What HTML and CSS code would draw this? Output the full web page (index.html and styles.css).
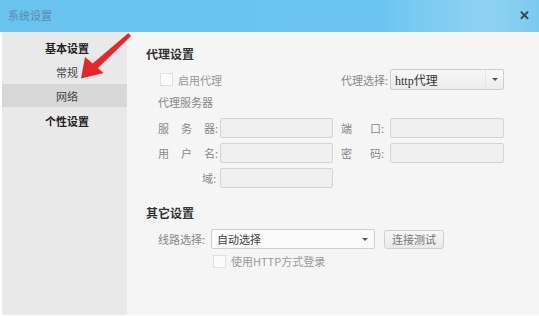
FILE: index.html
```html
<!DOCTYPE html>
<html lang="zh-CN">
<head>
<meta charset="utf-8">
<title>系统设置</title>
<link rel="stylesheet" href="styles.css">
</head>
<body>
<div class="window">
  <div class="titlebar">
    <span class="title">系统设置</span>
    <span class="close">✕</span>
  </div>
  <div class="main">
    <nav class="sidebar">
      <div class="nav-group">基本设置</div>
      <div class="nav-item">常规</div>
      <div class="nav-item active">网络</div>
      <div class="nav-group second">个性设置</div>
    </nav>
    <section class="content">
      <h2 class="sec-title">代理设置</h2>
      <div class="proxy">
        <div class="row row-top">
          <label class="chk-wrap"><span class="chk"></span><span>启用代理</span></label>
          <span class="lbl plain">代理选择:</span>
          <div class="select sel-proxy"><span class="sel-text mono">http代理</span><span class="sel-btn"><span class="caret"></span></span></div>
        </div>
        <div class="sub-title">代理服务器</div>
        <div class="row row-field">
          <span class="lbl lbl-left"><i>服</i><i>务</i><i>器:</i></span>
          <span class="input"></span>
          <span class="lbl lbl-right"><i>端</i><i>口:</i></span>
          <span class="input wide"></span>
        </div>
        <div class="row row-field">
          <span class="lbl lbl-left"><i>用</i><i>户</i><i>名:</i></span>
          <span class="input"></span>
          <span class="lbl lbl-right"><i>密</i><i>码:</i></span>
          <span class="input wide"></span>
        </div>
        <div class="row row-field">
          <span class="lbl lbl-left end"><i>域:</i></span>
          <span class="input"></span>
        </div>
      </div>
      <h2 class="sec-title other">其它设置</h2>
      <div class="proxy">
        <div class="row row-line">
          <span class="lbl-line">线路选择:</span>
          <div class="select sel-line"><span class="sel-text">自动选择</span><span class="caret"></span></div>
          <button class="btn">连接测试</button>
        </div>
        <label class="chk-wrap http"><span class="chk"></span><span>使用HTTP方式登录</span></label>
      </div>
    </section>
  </div>
  <svg class="arrow" width="60" height="50" viewBox="78 32 60 50" aria-hidden="true">
    <polygon points="128.5,33 131,36 97,69 92,64" fill="#e5262b"/>
    <polygon points="81,78.5 85,57 103.5,73" fill="#e5262b"/>
  </svg>
</div>
</body>
</html>
```
FILE: styles.css
```css
* { box-sizing: border-box; }
html, body { margin: 0; padding: 0; }
body {
  width: 539px;
  height: 316px;
  overflow: hidden;
  background: #ffffff;
  font-family: "Noto Sans CJK SC", "Microsoft YaHei", sans-serif;
  font-size: 11px;
  color: #888;
}
.window {
  position: relative;
  width: 539px;
  height: 316px;
  display: flex;
  flex-direction: column;
}
.titlebar {
  height: 32px;
  flex: none;
  display: flex;
  align-items: center;
  justify-content: space-between;
  padding: 0 9px 0 8px;
  background: linear-gradient(90deg, #68c3ef 0%, #6bc5f0 70%, #8fd2f2 90%, #7bcaef 100%);
}
.title { color: #5a8cab; font-size: 11px; line-height: 14px; margin-top: -2px; }
.close { color: #36444f; font-size: 13px; font-weight: bold; line-height: 13px; margin-top: -3px; }
.main {
  flex: 1;
  display: flex;
  padding-left: 2px;
  padding-bottom: 1px;
  background: #ffffff;
}
.sidebar {
  width: 125px;
  flex: none;
  background: #e9e9e9;
  padding-top: 4px;
  display: flex;
  flex-direction: column;
}
.nav-group, .nav-item {
  height: 24px;
  line-height: 24px;
  text-align: center;
  color: #333;
  padding-left: 5px;
}
.nav-group { font-weight: bold; color: #222; }
.nav-group.second { margin-top: 2px; }
.nav-item { color: #444; }
.nav-item.active { background: #d7d7d7; height: 23px; }
.content {
  flex: 1;
  background: #f5f5f5;
  padding: 14px 0 0 19px;
  display: flex;
  flex-direction: column;
}
.sec-title {
  margin: 0;
  font-size: 12px;
  line-height: 16px;
  font-weight: bold;
  color: #333;
}
.sec-title.other { margin-top: 17px; }
.proxy { margin-left: 12px; display: flex; flex-direction: column; }
.row { display: flex; align-items: center; }
.row-top { height: 21px; margin-top: 7px; }
.chk-wrap { display: flex; align-items: center; width: 183px; padding-left: 2px; color: #999; }
.chk {
  width: 13px; height: 13px;
  background: #fbfbfb;
  border: 1px solid #e0e0e0;
  margin-right: 5px;
  flex: none;
}
.plain { width: 49px; color: #888; }
.select {
  height: 21px;
  display: flex;
  align-items: center;
  border: 1px solid #cfcfcf;
  border-radius: 2px;
  background: linear-gradient(#f7f7f7, #ececec);
}
.sel-proxy { width: 114px; }
.sel-text { flex: 1; padding-left: 4px; color: #333; }
.mono { font-family: "Liberation Serif", "Noto Sans CJK SC", serif; font-size: 12px; }
.sel-btn { width: 18px; height: 100%; display: flex; align-items: center; justify-content: center; border-left: 1px solid #e6e6e6; }
.caret {
  width: 0; height: 0;
  border-left: 3px solid transparent;
  border-right: 3px solid transparent;
  border-top: 3px solid #555;
}
.sub-title { margin-top: 4px; line-height: 16px; height: 16px; color: #888; }
.row-field { height: 20px; margin-top: 5px; }
.sub-title + .row-field { margin-top: 8px; }
.lbl { display: flex; color: #888; }
.lbl i { font-style: normal; }
.lbl-left { width: 62px; gap: 12px; }
.lbl-left.end { justify-content: flex-start; padding-left: 44px; }
.lbl-right { width: 57px; padding-left: 8px; gap: 18px; }
.input {
  width: 113px; height: 20px;
  background: #efefef;
  border: 1px solid #d3d3d3;
  border-radius: 2px;
}
.input.wide { width: 114px; }
.row-line { height: 20px; margin-top: 8px; }
.lbl-line { width: 53px; color: #888; }
.sel-line { width: 164px; height: 20px; padding-right: 6px; background: #fafafa; }
.sel-line .sel-text { padding-left: 5px; color: #444; }
.btn {
  margin-left: 9px;
  width: 60px; height: 19px;
  padding: 0;
  font-family: inherit;
  font-size: 11px;
  color: #777;
  background: linear-gradient(#f6f6f6, #e9e9e9);
  border: 1px solid #cfcfcf;
  border-radius: 3px;
}
.chk-wrap.http { margin-top: 4px; padding-left: 55px; width: auto; }
.arrow { position: absolute; left: 78px; top: 32px; }
```
